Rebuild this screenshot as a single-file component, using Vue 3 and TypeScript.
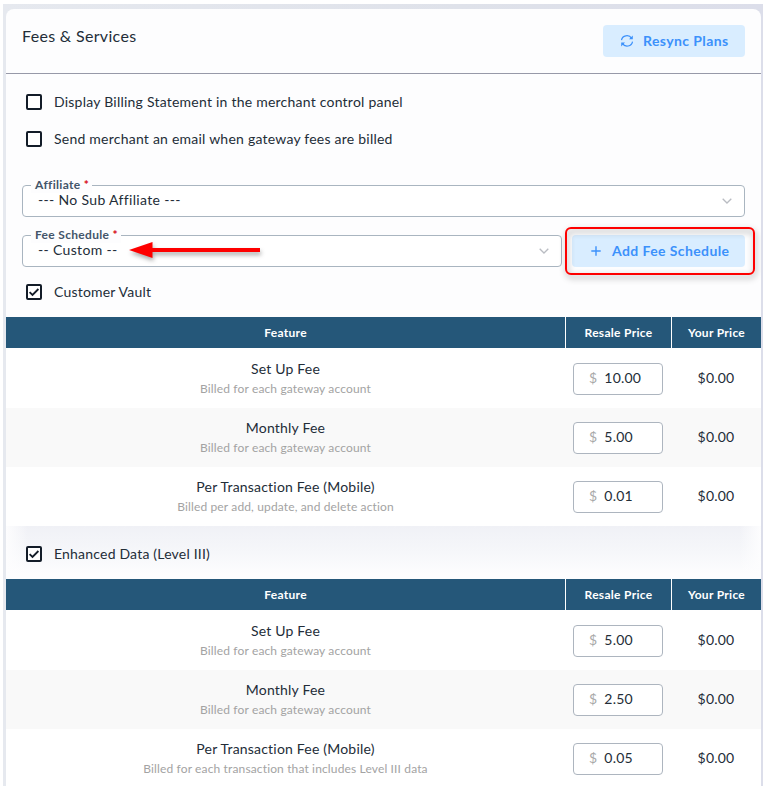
<script setup lang="ts">
import { ref } from 'vue'

interface Fee {
  name: string
  note: string
  resale: string
  cost: string
}
interface Service {
  name: string
  enabled: boolean
  fees: Fee[]
}

const options = ref([
  { label: 'Display Billing Statement in the merchant control panel', checked: false },
  { label: 'Send merchant an email when gateway fees are billed', checked: false },
])

const perAccount = 'Billed for each gateway account'
const services = ref<Service[]>([
  {
    name: 'Customer Vault',
    enabled: true,
    fees: [
      { name: 'Set Up Fee', note: perAccount, resale: '10.00', cost: '$0.00' },
      { name: 'Monthly Fee', note: perAccount, resale: '5.00', cost: '$0.00' },
      { name: 'Per Transaction Fee (Mobile)', note: 'Billed per add, update, and delete action', resale: '0.01', cost: '$0.00' },
    ],
  },
  {
    name: 'Enhanced Data (Level III)',
    enabled: true,
    fees: [
      { name: 'Set Up Fee', note: perAccount, resale: '5.00', cost: '$0.00' },
      { name: 'Monthly Fee', note: perAccount, resale: '2.50', cost: '$0.00' },
      { name: 'Per Transaction Fee (Mobile)', note: 'Billed for each transaction that includes Level III data', resale: '0.05', cost: '$0.00' },
    ],
  },
])
</script>

<template>
  <div class="page">
    <main class="card">
      <header class="head">
        <h1>Fees &amp; Services</h1>
        <button class="btn resync">
          <svg width="14" height="14" viewBox="0 0 14 14" fill="none" stroke="currentColor" stroke-width="1.2">
            <path d="M1.5 6.2A5.4 5.1 0 0 1 11.6 4.4M12.5 7.6A5.4 5.1 0 0 1 2.4 9.4" />
            <path d="M12.8 1.4V5.2H9zM1.2 12.4V8.6H5z" fill="currentColor" stroke="none" />
          </svg>
          <span>Resync Plans</span>
        </button>
      </header>

      <section class="options">
        <label v-for="o in options" :key="o.label" class="check" @click="o.checked = !o.checked">
          <span class="box"><svg v-if="o.checked" width="12" height="12" viewBox="0 0 12 12"><path d="M1.6 6.2 4.5 9 10.4 3" /></svg></span>
          <span>{{ o.label }}</span>
        </label>
      </section>

      <section class="fields">
        <div class="select">
          <span class="legend">Affiliate <em>*</em></span>
          <span class="value">--- No Sub Affiliate ---</span>
          <svg class="chev" width="10" height="6" viewBox="0 0 10 6"><path d="M.7.7 5 5 9.3.7" /></svg>
        </div>
        <div class="line">
          <div class="select">
            <span class="legend">Fee Schedule <em>*</em></span>
            <span class="value">-- Custom --</span>
            <svg class="chev" width="10" height="6" viewBox="0 0 10 6"><path d="M.7.7 5 5 9.3.7" /></svg>
            <svg class="arrow" width="150" height="34" viewBox="0 0 150 34">
              <path d="M5 16 28.5 8V14H136V18H28.5V24z" />
            </svg>
          </div>
          <div class="add-wrap">
            <button class="btn add">
              <svg width="10" height="10" viewBox="0 0 10 10" fill="none" stroke="currentColor" stroke-width="1.4"><path d="M5 .3V9.7M.3 5H9.7" /></svg>
              <span>Add Fee Schedule</span>
            </button>
            <span class="callout"></span>
          </div>
        </div>
      </section>

      <section v-for="s in services" :key="s.name" class="service">
        <label class="check" @click="s.enabled = !s.enabled">
          <span class="box"><svg v-if="s.enabled" width="12" height="12" viewBox="0 0 12 12"><path d="M1.6 6.2 4.5 9 10.4 3" /></svg></span>
          <span>{{ s.name }}</span>
        </label>
        <div class="table">
          <div class="row thead">
            <span>Feature</span><span>Resale Price</span><span>Your Price</span>
          </div>
          <div v-for="f in s.fees" :key="f.name" class="row fee">
            <div class="feature">
              <div class="name">{{ f.name }}</div>
              <div class="note">{{ f.note }}</div>
            </div>
            <div class="price"><i>$</i><span>{{ f.resale }}</span></div>
            <div class="cost">{{ f.cost }}</div>
          </div>
        </div>
      </section>
    </main>
  </div>
</template>

<style>
body {
  background: #fff;
}
</style>

<style scoped>
.page {
  box-sizing: border-box;
  width: 760px;
  height: 782px;
  margin: 4px 0 0 3px;
  padding: 5px 2px 0 3px;
  background: linear-gradient(90deg, #e6e9ef, #dfe2ea 60%, #dcdeea);
  overflow: hidden;
  font: 14px/20px Lato, sans-serif;
  letter-spacing: 0.2px;
  color: #232d38;
}
.card {
  height: 790px;
  border-radius: 8px 8px 0 0;
  background: #fdfdfe;
  overflow: hidden;
}
.head {
  box-sizing: border-box;
  height: 65px;
  display: flex;
  align-items: flex-start;
  justify-content: space-between;
  padding: 16px 16px 0;
  border-bottom: 1px solid #9799a8;
}
h1 {
  margin: 1px 0 0;
  font-size: 16px;
  line-height: 20px;
  font-weight: 400;
  letter-spacing: 0.32px;
}
.btn {
  box-sizing: border-box;
  height: 32px;
  display: flex;
  align-items: center;
  border: 0;
  border-radius: 4px;
  background: #d9edff;
  color: #3c91fb;
  font: 700 14px/20px Lato, sans-serif;
  letter-spacing: 0.4px;
  white-space: nowrap;
}
.resync {
  width: 142px;
  gap: 9px;
  padding: 0 0 0 17px;
}
.add {
  width: 173px;
  gap: 11px;
  padding: 0 0 0 19px;
}
.options {
  padding: 9px 0 28px;
}
.options .check {
  letter-spacing: 0.23px;
}
.check {
  height: 37px;
  display: flex;
  align-items: center;
  gap: 12px;
  padding-left: 20px;
}
.box {
  box-sizing: border-box;
  width: 16px;
  height: 16px;
  border: 2px solid #131c28;
  border-radius: 2px;
  background: #fff;
}
.box svg {
  display: block;
  fill: none;
  stroke: #131c28;
  stroke-width: 1.8;
}
.fields {
  display: flex;
  flex-direction: column;
  gap: 18px;
  padding: 0 16px;
}
.line {
  display: flex;
  gap: 10px;
}
.select {
  position: relative;
  flex: 1;
  box-sizing: border-box;
  height: 32px;
  min-height: 32px;
  display: flex;
  align-items: center;
  justify-content: space-between;
  padding: 0 12px 0 15px;
  border: 1px solid #a9b5c0;
  border-radius: 4px;
  background: #fff;
}
.legend {
  position: absolute;
  left: 8px;
  top: -9px;
  padding: 0 3px 0 4px;
  background: #fdfdfe;
  font-size: 12px;
  line-height: 16px;
  font-weight: 700;
  letter-spacing: 0.32px;
  color: #43556a;
}
.legend em {
  font-style: normal;
  font-weight: 900;
  color: #d8101c;
}
.value {
  letter-spacing: 0.33px;
  padding-bottom: 2px;
}
.chev {
  fill: none;
  stroke: #b9bcc2;
  stroke-width: 1.3;
}
.arrow {
  position: absolute;
  left: 101px;
  top: -2px;
  fill: #fe0000;
  filter: drop-shadow(1px 3px 2px rgba(0, 0, 0, 0.33));
}
.add-wrap {
  position: relative;
}
.callout {
  position: absolute;
  inset: -8px -10px -8px -7px;
  border: 2px solid #fe0000;
  border-radius: 6px;
  filter: drop-shadow(1px 3px 3px rgba(0, 0, 0, 0.4));
  pointer-events: none;
}
.service > .check {
  height: 50px;
}
.service + .service > .check {
  box-sizing: border-box;
  height: 53px;
  padding-top: 3px;
  background: linear-gradient(90deg, #fdfdfe, rgba(253, 253, 254, 0) 22px, rgba(253, 253, 254, 0) calc(100% - 22px), #fdfdfe),
    linear-gradient(#f0f1f6, #f6f7fa 50%, #fdfdfe 90%);
}
.row {
  display: grid;
  grid-template-columns: 559px 105px 89px;
  column-gap: 1px;
  align-items: center;
  text-align: center;
}
.thead {
  height: 31px;
  background: #fff;
  color: #fff;
  font-size: 12px;
  font-weight: 700;
  letter-spacing: 0.3px;
}
.thead span {
  height: 31px;
  line-height: 31px;
  background: #255779;
}
.fee {
  height: 59px;
  background: #fff;
}
.thead + .fee {
  padding-top: 1px;
}
.fee:nth-child(odd) {
  background: #f9f9f9;
}
.feature {
  padding-bottom: 1px;
}
.name {
  line-height: 20px;
}
.note {
  font-size: 12px;
  line-height: 19px;
  letter-spacing: 0.14px;
  color: #a3a3a3;
}
.price {
  box-sizing: border-box;
  width: 90px;
  height: 32px;
  margin-left: 7px;
  display: flex;
  align-items: center;
  gap: 7px;
  padding: 0 0 2px 15px;
  border: 1px solid #adb5bf;
  border-radius: 4px;
  background: #fff;
}
.price i {
  font-style: normal;
  color: #a9a9a9;
}
.cost {
  padding: 0 1px 2px 0;
}
</style>
